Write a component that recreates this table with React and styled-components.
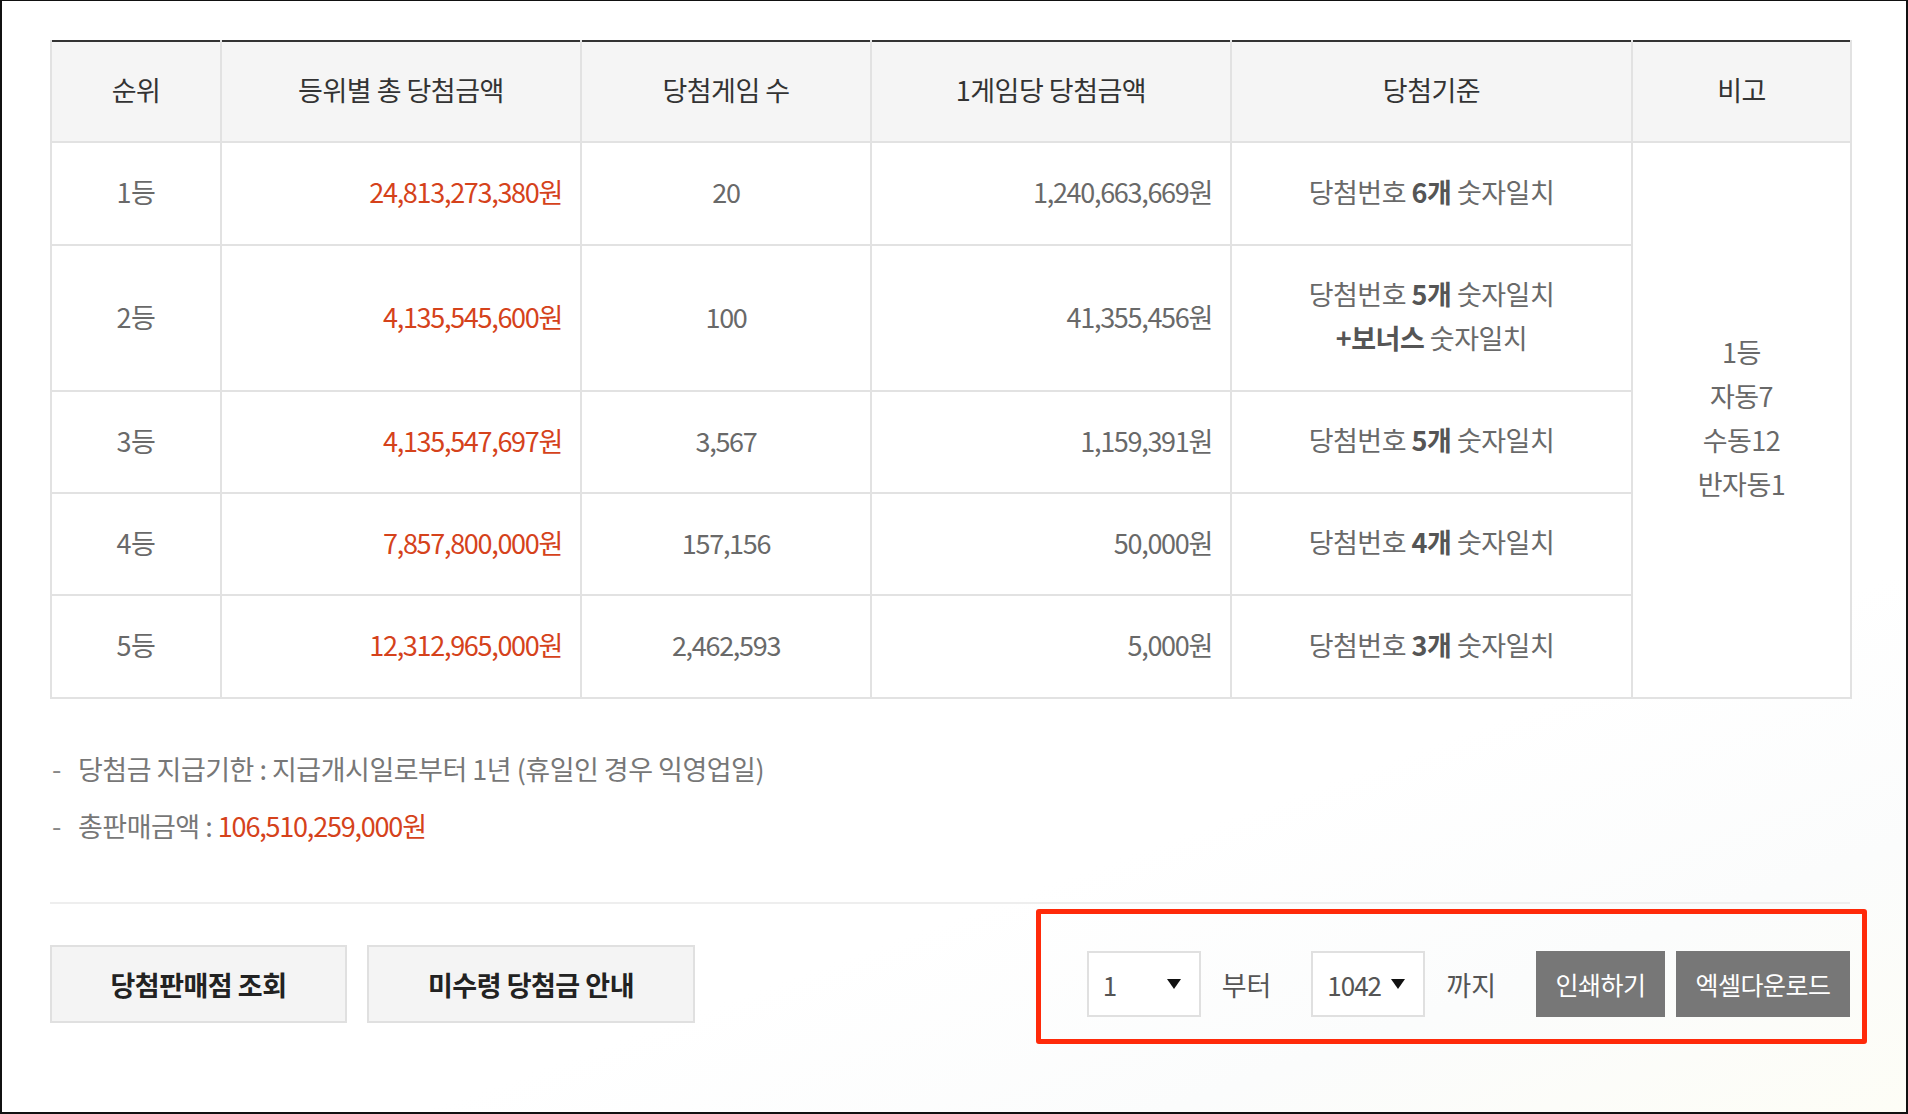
import React from "react";
import styled, { createGlobalStyle } from "styled-components";

const GlobalStyle = createGlobalStyle`
  html, body {
    margin: 0;
    padding: 0;
    background: #fff;
  }
  body {
    font-family: "Noto Sans CJK KR", "Noto Sans", sans-serif;
    color: #666;
  }
  * {
    box-sizing: border-box;
  }
`;

const rows = [
  { rank: "1등", total: "24,813,273,380원", count: "20", per: "1,240,663,669원", num: "6개", height: 103 },
  { rank: "2등", total: "4,135,545,600원", count: "100", per: "41,355,456원", num: "5개", bonus: true, height: 146 },
  { rank: "3등", total: "4,135,547,697원", count: "3,567", per: "1,159,391원", num: "5개", height: 102 },
  { rank: "4등", total: "7,857,800,000원", count: "157,156", per: "50,000원", num: "4개", height: 102 },
  { rank: "5등", total: "12,312,965,000원", count: "2,462,593", per: "5,000원", num: "3개", height: 103 },
];

const App = () => {
  return (
    <>
      <GlobalStyle />
      <Frame>
        <Content>
          <Table>
            <colgroup>
              <col style={{ width: 170 }} />
              <col style={{ width: 360 }} />
              <col style={{ width: 290 }} />
              <col style={{ width: 360 }} />
              <col style={{ width: 401 }} />
              <col style={{ width: 219 }} />
            </colgroup>
            <thead>
              <tr>
                <Th>순위</Th>
                <Th>등위별 총 당첨금액</Th>
                <Th>당첨게임 수</Th>
                <Th>1게임당 당첨금액</Th>
                <Th>당첨기준</Th>
                <Th>비고</Th>
              </tr>
            </thead>
            <tbody>
              {rows.map((r, i) => (
                <tr key={r.rank}>
                  <Td $h={r.height}>{r.rank}</Td>
                  <Td $h={r.height} $align="right" $num $red>
                    {r.total}
                  </Td>
                  <Td $h={r.height} $num>
                    {r.count}
                  </Td>
                  <Td $h={r.height} $align="right" $num>
                    {r.per}
                  </Td>
                  <Td $h={r.height}>
                    <Lines>
                      <span>
                        당첨번호 <b>{r.num}</b> 숫자일치
                      </span>
                      {r.bonus && (
                        <span>
                          <b>+보너스</b> 숫자일치
                        </span>
                      )}
                    </Lines>
                  </Td>
                  {i === 0 && (
                    <Td rowSpan={5}>
                      <Lines>
                        <span>1등</span>
                        <span>자동7</span>
                        <span>수동12</span>
                        <span>반자동1</span>
                      </Lines>
                    </Td>
                  )}
                </tr>
              ))}
            </tbody>
          </Table>

          <Notes>
            <li>당첨금 지급기한 : 지급개시일로부터 1년 (휴일인 경우 익영업일)</li>
            <li>
              총판매금액 : <Red>106,510,259,000원</Red>
            </li>
          </Notes>

          <Bottom>
            <LinkGroup>
              <LinkButton $w={297}>당첨판매점 조회</LinkButton>
              <LinkButton $w={328}>미수령 당첨금 안내</LinkButton>
            </LinkGroup>
            <RangeGroup>
              <Select>
                <span>1</span>
                <Arrow />
              </Select>
              <Label>부터</Label>
              <Select>
                <span>1042</span>
                <Arrow />
              </Select>
              <Label>까지</Label>
              <GrayButton $w={129}>인쇄하기</GrayButton>
              <GrayButton $w={174}>엑셀다운로드</GrayButton>
              <Highlight />
            </RangeGroup>
          </Bottom>
        </Content>
      </Frame>
    </>
  );
};

export default App;

const Frame = styled.div`
  width: 1908px;
  height: 1114px;
  border: 2px solid #111;
  border-top-width: 1px;
  padding: 39px 0 0 48px;
  overflow: hidden;
  background: linear-gradient(160deg, #fff 70%, #fbfcfc 85%, #fdfdf6 100%);
`;

const Content = styled.div`
  width: 1800px;
`;

const Table = styled.table`
  width: 1800px;
  border-collapse: collapse;
  table-layout: fixed;
  border-top: 2px solid #333;
`;

const Th = styled.th`
  height: 101px;
  padding: 0 0 4px;
  background: #f5f5f5;
  border: 2px solid #e2e2e2;
  border-top: none;
  font-size: 27px;
  font-weight: 400;
  color: #333;
  letter-spacing: -0.5px;
  text-align: center;
`;

const Td = styled.td`
  height: ${(p) => (p.$h ? `${p.$h}px` : "auto")};
  padding: 0 ${(p) => (p.$align === "right" ? "18px" : "0")} 4px 0;
  border: 2px solid #e2e2e2;
  font-size: 27px;
  color: ${(p) => (p.$red ? "#d5421b" : "#696969")};
  letter-spacing: ${(p) => (p.$num ? "-1.3px" : "-0.5px")};
  text-align: ${(p) => p.$align || "center"};
  vertical-align: middle;
  background: #fff;

  b {
    font-weight: 700;
    color: #555;
  }
`;

const Lines = styled.div`
  display: flex;
  flex-direction: column;
  align-items: center;
  line-height: 44px;
`;

const Notes = styled.ul`
  list-style: none;
  margin: 0;
  padding: 41px 0 0 2px;
  height: 205px;
  border-bottom: 2px solid #eee;

  li {
    position: relative;
    padding-left: 26px;
    font-size: 27px;
    line-height: 57px;
    color: #777;
    letter-spacing: -0.5px;
  }

  li::before {
    content: "-";
    position: absolute;
    left: 0;
    color: #888;
  }
`;

const Red = styled.span`
  color: #d5421b;
  letter-spacing: -1.2px;
`;

const Bottom = styled.div`
  display: flex;
  align-items: center;
  justify-content: space-between;
  margin-top: 41px;
`;

const LinkGroup = styled.div`
  display: flex;
  gap: 20px;
`;

const LinkButton = styled.button`
  width: ${(p) => p.$w}px;
  height: 78px;
  border: 2px solid #e0e0e0;
  background: #f4f4f4;
  font-family: inherit;
  font-size: 27px;
  font-weight: 700;
  color: #222;
  letter-spacing: -0.5px;
`;

const RangeGroup = styled.div`
  position: relative;
  display: flex;
  align-items: center;
`;

const Select = styled.div`
  display: flex;
  align-items: center;
  justify-content: space-between;
  width: 114px;
  height: 66px;
  padding: 0 18px 0 14px;
  border: 2px solid #e0e0e0;
  background: #fff;
  font-size: 26px;
  color: #555;
  letter-spacing: -1px;
`;

const Arrow = styled.i`
  width: 0;
  height: 0;
  border-left: 7px solid transparent;
  border-right: 7px solid transparent;
  border-top: 10px solid #111;
`;

const Label = styled.span`
  margin: 0 40px 0 21px;
  font-size: 27px;
  color: #555;
`;

const GrayButton = styled.button`
  width: ${(p) => p.$w}px;
  height: 66px;
  margin-left: 11px;
  border: none;
  background: #777;
  font-family: inherit;
  font-size: 25px;
  color: #fff;
  letter-spacing: -0.5px;

  &:first-of-type {
    margin-left: 0;
  }
`;

const Highlight = styled.div`
  position: absolute;
  top: -42px;
  bottom: -27px;
  left: -51px;
  right: -17px;
  border: 5px solid #ff2a0a;
  border-radius: 3px;
  pointer-events: none;
`;
